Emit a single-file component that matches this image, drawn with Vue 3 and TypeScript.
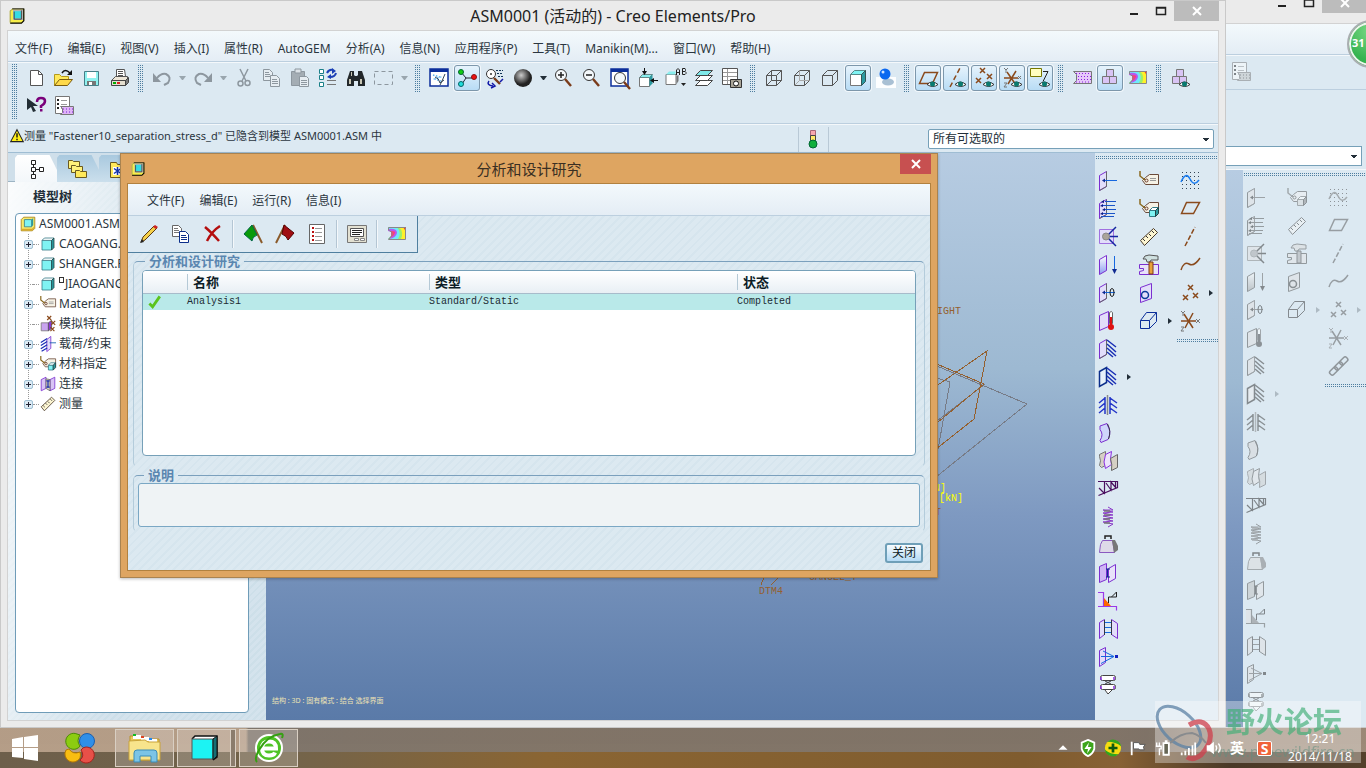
<script setup lang="ts">
import { ref } from 'vue'

interface Tool {
  id: string
  label: string
  pressed?: boolean
  arrow?: boolean
}

const P = '#7b2fd0'
const B = '#8a4a1c'
const plane = `<path d="M1.500 4.500l7-4v15l-7 4z" fill="#e2defa" stroke="${P}"/><path d="M8.500 .500v15l-7 4" fill="none" stroke="#666"/>`
const eye = '<path d="M9 16.500q5-5 11 0q-5 4-11 0z" fill="#fff" stroke="#333"/><circle cx="14.500" cy="16" r="2.500" fill="#0a7a70"/>'
const hatchR = '<path d="M9 1l9 7M9 5l9 8M9 9l9 8M9 13l6 5" stroke="#1a2fb5" stroke-width="1.500" fill="none"/>'
const glass = (x: number, y: number) => `<circle cx="${x}" cy="${y}" r="5.500" fill="#f4f8fb" stroke="#333"/><path d="M${x + 4} ${y + 4}l6 7" stroke="#7a3b1a" stroke-width="2.400"/>`
const cube = (x: number, y: number, s: number) => `<path d="M${x} ${y + 3}h${s}v${s}h-${s}z" fill="#7ff3f3" stroke="#357a86"/><path d="M${x} ${y + 3}l3-3h${s}l-3 3z" fill="#fff" stroke="#357a86"/><path d="M${x + s} ${y + 3}l3-3v${s}l-3 3z" fill="#2b9aa0" stroke="#244"/>`
const tag = '<path d="M6.500 6.500l4-3h9v10h-13l-3-4z" fill="#f6f2e6" stroke="#6a4a3a"/><circle cx="7.500" cy="9.500" r="1.500" fill="none" stroke="#6a3a2a"/><path d="M1 0v5l5 4" fill="none" stroke="#8a6a20" stroke-width="1.500"/>'
const cross = (x: number, y: number) => `<path d="M${x - 2} ${y - 2}l5 5M${x + 3} ${y - 2}l-5 5" stroke="${B}" stroke-width="1.500"/>`
const rainbow = '<path d="M1 3h18v12h-18l4-4v-3l-4-2z" fill="#ff3a2a"/><path d="M1 3h15q4 5 2 12h-17l4-4v-3l-4-2z" fill="#fff02a"/><path d="M1 3h11q5 5 2 12h-13l4-4v-3l-4-2z" fill="#9df06a"/><path d="M1 3h9q5 6 1 12h-10l4-4v-3l-4-2z" fill="#6fe8fa"/><path d="M1 5q9-1 9 4q-1 5-8 6l3-4v-3l-4-1z" fill="#b45af0"/><path d="M4 7q5 0 4 2q-1 3-4 4v-4z" fill="#ff3a7a"/><path d="M1.500 6v-2.500h17v12h-17l3.500-4v-3z" fill="none" stroke="#888"/>'
const mesh = '<path d="M1.500 3.500h18v12h-18l3-3v-6z" fill="#e6c8fa" stroke="#777"/><path d="M4 5.500h14M6 8.500h13M6 11.500h13M4 14h14" stroke="#8a1fe0" stroke-width="1.200" stroke-dasharray="1 2"/>'
const blocks = '<g fill="#d9c4f5" stroke="#777"><path d="M6.500 1.500h7v7h-7zM2.500 8.500h7v7h-7zM9.500 8.500h7v7h-7z"/></g>'
const box3 = (hidden: string) => `<g fill="none" stroke="#555"><path d="M2.500 7.500h10v10h-10zM2.500 7.500l5-5h10l-5 5M17.500 2.500v10l-5 5"/>${hidden}</g>`
const sheet = '<path d="M1.500 .500h14v17h-14z" fill="#fff" stroke="#777"/><path d="M3 4h2M3 8h2M3 12h2" stroke="#222" stroke-width="2"/><path d="M7 4.500h6M7 8.500h6M7 12.500h4" stroke="#999"/>'
const copy = (c: string) => `<path d="M1.500 1.500h6l3 3v8h-9z" fill="#fff" stroke="#666"/><path d="M3 4.500h4M3 6.500h5M3 8.500h5" stroke="#777"/><path d="M8.500 7.500h6l3 3v8h-9z" fill="#fff" stroke="${c}"/><path d="M10 11.500h5M10 13.500h6M10 15.500h6" stroke="${c}"/>`

const icons: Record<string, string> = {
  app: '<path d="M1 3l3-2h15v15l-3 3h-15z" fill="#f7ee4a"/><path d="M1.500 18v-14.500l3-2h13" fill="none" stroke="#8a8a55"/><path d="M5 2h13v13h-13z" fill="#b4b4b4"/><path d="M6 4h9v9h-9z" fill="#35dbe4"/><path d="M6.500 14v-9.500M15.500 3v11h-9" fill="none" stroke="#333"/><path d="M18.500 1v15l-3 3h-14" fill="none" stroke="#000" stroke-width="1.500"/><path d="M4 1h15" stroke="#000"/>',
  new: '<path d="M4.500 2.500h8l4 4v11h-12z" fill="#fff" stroke="#555"/><path d="M12.500 2.500v4h4" fill="none" stroke="#555"/>',
  open: '<path d="M.500 17.500v-11h5l2 2h7v3" fill="#ffe95a" stroke="#b59a1a"/><path d="M.500 17.500l5-6h13l-5 6z" fill="#ffd94a" stroke="#7a5c10"/><path d="M8 5q3-5 8 0" fill="none" stroke="#111" stroke-width="1.500"/><path d="M18 2v5h-5z" fill="#111"/>',
  save: '<path d="M2.500 3.500h14v14h-14z" fill="#8ff2f0" stroke="#477f88"/><path d="M5 4h9v6h-9z" fill="#fff"/><path d="M5 13h9v4h-9z" fill="#777"/><path d="M7 14h3v3h-3z" fill="#fff"/>',
  print: '<path d="M6.500 8.500v-7h8l1 7z" fill="#fff" stroke="#555"/><path d="M8 3.500h5M8 5.500h5M8 7.500h5" stroke="#555"/><path d="M1.500 12.500l4-4h12v4z" fill="#ece6d8" stroke="#555"/><path d="M1.500 12.500h14v5h-14z" fill="#e4decf" stroke="#444"/><path d="M15.500 12.500l3-3v5l-3 3z" fill="#777" stroke="#444"/><path d="M3 14h3v2h-3z" fill="#0a0"/><path d="M7 14h3v2h-3z" fill="#d22"/>',
  undo: '<path d="M1 5v9h8z" fill="#8d979f"/><path d="M5 10q4-5 9-4q6 3 2 9l-4 2" fill="none" stroke="#8d979f" stroke-width="2"/>',
  redo: '<path d="M19 5v9h-8z" fill="#8d979f"/><path d="M15 10q-4-5-9-4q-6 3-2 9l4 2" fill="none" stroke="#8d979f" stroke-width="2"/>',
  cut: '<g fill="none" stroke="#8d979f" stroke-width="1.500"><path d="M6 1l6 12M14 1l-6 12"/><circle cx="6.500" cy="15.500" r="2.500"/><circle cx="13.500" cy="15" r="2.500"/></g>',
  copyg: copy('#8d979f').replace(/#666|#777/g, '#8d979f').replace(/#fff/g, '#e6edf2'),
  paste: '<path d="M1.500 3.500h13v14h-13z" fill="#a4adb4" stroke="#8d979f"/><path d="M5 1h6v4h-6z" fill="#dde3e8" stroke="#8d979f"/><path d="M9.500 8.500h7l2 2v8h-9z" fill="#e6edf2" stroke="#8d979f"/><path d="M11 12.500h6M11 14.500h6M11 16.500h6" stroke="#8d979f"/>',
  regen: '<g fill="#fff" stroke="#1b8088"><path d="M1.500 1.500h4v4h-4zM1.500 7.500h4v4h-4zM1.500 14.500h4v4h-4z"/></g><path d="M9 5q2-4 6-3M18 5q-1 4-6 4" fill="none" stroke="#1a3fb5" stroke-width="2"/><path d="M14 0l4 3-4 3zM13 11l-4-2 4-3z" fill="#1a3fb5"/><path d="M9 12.500h9M9 16.500h9" stroke="#777"/>',
  find: '<path d="M4 3h4v4l1 1h2l1-1v-4h4l3 9v6h-7v-5h-4v5h-7v-6z" fill="#23282b"/><path d="M3 11h2v5h-2zM14 11h2v5h-2zM5 4h1v4h-1z" fill="#c9c6b4"/>',
  select: '<path d="M.500 3.500h18v13h-18z" fill="none" stroke="#8d979f" stroke-dasharray="4 3"/>',
  help: '<path d="M1 2v12l4-3 2 5 3-1-3-5h5z" fill="#222d35"/><path d="M11 6q0-4 4-4t4 3q0 3-4 5v2" fill="none" stroke="#7a007a" stroke-width="2.500"/><path d="M14 13h2.500v2.500h-2.500z" fill="#7a007a"/>',
  sheet: sheet + '<path d="M6.500 10.500h13v8h-13l2-2v-4z" fill="#dfb4f7" stroke="#777"/><path d="M9 13h10M9 16h10" stroke="#7a1fd0" stroke-dasharray="1 2"/>',
  repaint: '<path d="M1 1h18v17h-18z" fill="#fff" stroke="#0b2e9a" stroke-width="1.500"/><path d="M1 1h18v3h-18z" fill="#0b2e9a"/><path d="M4 7l7 2-5 2 6 2" stroke="#59b0ee" stroke-width="1.500" stroke-dasharray="1.500 1.500" fill="none"/><path d="M16 6l-3 7-2 4M6 9q4 1 5 6l4-3" fill="none" stroke="#345"/>',
  spin: '<path d="M4 4l5 6-4 6M9 10h8" fill="none" stroke="#223"/><circle cx="4" cy="4" r="2.500" fill="#1c1" stroke="#063"/><circle cx="4" cy="16" r="2.500" fill="#2dd" stroke="#066"/><circle cx="17" cy="9" r="2.500" fill="#e11" stroke="#811"/>',
  orient: '<circle cx="6" cy="6" r="4.500" fill="#fff" stroke="#333"/><circle cx="6" cy="6" r="1" fill="#333"/><path d="M9 10l6 6" stroke="#7a3b1a" stroke-width="2.400"/><path d="M11 2.500h7M12 5.500h6M13 8.500h5" stroke="#135" stroke-dasharray="2 1"/><path d="M4 13q-3 4 4 5M7 15l3 3-4 2M18 11l-3 3" fill="none" stroke="#1219a8" stroke-width="1.500"/>',
  sphere: '<defs><radialGradient id="sph" cx=".4" cy=".35"><stop offset="0" stop-color="#ccc"/><stop offset=".5" stop-color="#777"/><stop offset="1" stop-color="#222"/></radialGradient></defs><circle cx="10" cy="10" r="9" fill="url(#sph)"/>',
  zoomin: glass(7, 7) + '<path d="M4 7h6M7 4v6" stroke="#222" stroke-width="1.500"/>',
  zoomout: glass(7, 7) + '<path d="M4 7h6" stroke="#222" stroke-width="1.500"/>',
  refit: '<path d="M1 1h17v17h-17z" fill="#fff" stroke="#0b2e9a" stroke-width="1.500"/><path d="M1 1h17v3h-17z" fill="#0b2e9a"/>' + glass(10, 10),
  normal: '<path d="M1.500 9.500h10v9h-10z" fill="#fff" stroke="#777"/><path d="M1.500 9.500l3-3h10l-3 3z" fill="#8ee" stroke="#688"/><path d="M11.500 9.500l3-3v9l-3 3z" fill="#2b9aa0"/><path d="M6.500 0v5M13 12.500h7" stroke="#111"/><path d="M4 3h5l-2.500 4zM16 10v5l-4-2.500z" fill="#111"/>',
  saved: '<path d="M0 6.500h10v10h-10z" fill="#fff" stroke="#777"/><path d="M0 6.500l3-3h7l-1 3z" fill="#8ee"/><path d="M10.500 8l2-1v6l-2 3z" fill="#777"/><g fill="none" stroke="#222"><path d="M10.500 7v-5l1.500-1.500l1.500 1.500v5M10.500 4.500h3M16.500 .500v6h2.500l1-1v-1l-1-1h-2.500h2.500l.500-1v-1l-.500-1z"/></g><path d="M15 15h5l-2.500 3z" fill="#222"/>',
  layers: '<g fill="#fff" stroke="#444"><path d="M1.500 17.500l5-5h12l-5 5z"/><path d="M1.500 12.500l5-5h12l-5 5z"/><path d="M1.500 7.500l5-5h12l-5 5z" fill="#7feaea"/></g>',
  viewman: '<path d="M.500 .500h15v16h-15z" fill="#fff" stroke="#555"/><path d="M5.500 1v15M1 4.500h14M1 8.500h14M1 12.500h14" stroke="#999"/><path d="M8.500 11.500h11v8h-11z" fill="#aaa598" stroke="#333"/><circle cx="14" cy="15.500" r="2.500" fill="#fff" stroke="#111"/>',
  wire: box3('<path d="M7.500 2.500v10h10M7.500 12.500l-5 5"/>'),
  hidden: box3('<path d="M7.500 2.500v10h10M7.500 12.500l-5 5" stroke="#aaa"/>'),
  nohidden: box3(''),
  shaded: '<path d="M2.500 6.500h11v11h-11z" fill="#fff" stroke="#777"/><path d="M2.500 6.500l4-4h11l-4 4z" fill="#7ff3f3" stroke="#588"/><path d="M13.500 6.500l4-4v11l-4 4z" fill="#2b9aa0" stroke="#355"/>',
  ball: '<path d="M0 9h20v11h-20z" fill="#fdfeff"/><ellipse cx="12" cy="14" rx="6" ry="3.500" fill="#a9c0d4"/><circle cx="9" cy="6" r="5.500" fill="#0a68f0"/><circle cx="7" cy="4" r="1.500" fill="#cfe4ff"/>',
  dplane: `<path d="M1.500 15.500l5-11h13l-5 11z" fill="none" stroke="${B}" stroke-width="1.500"/>` + eye,
  daxis: `<path d="M4 19l10-19" stroke="${B}" stroke-width="1.500" stroke-dasharray="5 3"/>` + eye,
  dpoint: cross(8, 2) + cross(4, 12) + cross(15, 8) + eye,
  dcsys: `<path d="M2 10h14M5 4l9 13M14 3l-8 13" stroke="${B}" stroke-width="1.500"/><path d="M2 0l2 2 2-2M4 2v3M16 8l3 3M19 8l-3 3M2 15h3l-3 4h3" fill="none" stroke="#777"/>` + eye,
  danno: '<path d="M.500 .500h11v8h-11z" fill="#ffffc0" stroke="#777700"/><path d="M13 3.500h5l-5 10" fill="none" stroke="#222"/>' + eye,
  mesh, blocks, rainbow,
  blockseye: blocks + eye,
  tree: '<g fill="#fff" stroke="#222"><path d="M5.500 1.500h4v4h-4zM5.500 8.500h4v4h-4zM5.500 15.500h4v4h-4zM13.500 8.500h4v4h-4z"/><path d="M9.500 10.500h4M7.500 5.500v3M7.500 12.500v3"/></g>',
  folders: '<g stroke="#6a5a20"><path d="M.500 1.500h4l1 1h6v7h-11z" fill="#fff27a"/><path d="M3.500 6.500h4l1 1h6v6h-11z" fill="#fff27a"/><path d="M7.500 11.500h4l1 1h6v6h-11z" fill="#ffe95a"/></g>',
  fav: '<path d="M.500 3.500h6l1 2h12v13h-19z" fill="#ffe95a" stroke="#6a5a20"/><path d="M3 8h9v8h-9z" fill="#fff"/><path d="M7.500 8v8M4 9.500l7 5M11 9.500l-7 5" stroke="#13a" stroke-width="1.500"/>',
  part: cube(2.5, 2.5, 12),
  asm: '<path d="M1.500 4.500l3-3h14v14l-3 3h-14z" fill="#f7e96a" stroke="#a07a10"/><path d="M2 16h13l3-3v2l-3 3h-13z" fill="#d9a92a"/><path d="M5.500 4.500h9v9h-9z" fill="#7ff3f3" stroke="#357a86"/><path d="M14.500 4.500l2-2v9l-2 2z" fill="#2b9aa0"/>',
  tag: tag + '<path d="M11 7.500h6M11 9.500h6" stroke="#999"/>',
  tagcube: tag + cube(10.5, 8.5, 6),
  simfeat: '<path d="M1.500 8.500h9v10h-9z" fill="#c9a4f0" stroke="#777"/><path d="M10.500 8.500l4-3v10l-4 3z" fill="#8a3ad8" stroke="#555"/>' + cross(11, 2) + cross(16, 8) + cross(15, 16),
  loads: '<path d="M8.500 4.500l5-4v15l-5 4z" fill="#e2defa" stroke="#7b2fd0"/><path d="M1 8l8-5M1 12l8-5M1 16l8-5M2 19l7-4" stroke="#1a2fb5" stroke-width="1.500"/><path d="M12 8.500h8" stroke="#05a"/>',
  joints: '<path d="M1.500 4.500l6-3v14l-6 3zM12.500 4.500l6-3v14l-6 3z" fill="#d9c4f5" stroke="#7b2fd0"/><path d="M7.500 3.500l5 1v14l-5-3z" fill="#ddd8c8" stroke="#666"/><path d="M10 6v8M8 6h4M8 14h4" stroke="#12a" stroke-width="1.500"/>',
  ruler: '<path d="M1.500 13.500l13-12 4 4-13 13z" fill="#fdf6d2" stroke="#4a3a2a"/><path d="M4 12l2 2M7 9l2 2M10 7l2 2M13 4l2 2" stroke="#333"/>',
  force: plane + '<path d="M5 9.500h14" stroke="#1668e0"/><path d="M4 9.500l3-2v4z" fill="#112a90"/>',
  pressure: plane + '<path d="M7 2.500h11M4 6.500h13M7 10.500h11M4 14.500h13M3 17.500h13" stroke="#1b55c8"/><path d="M6 1v3l-3-1zM5 5v3l-3-1zM7 9v3l-3-1zM5 13v3l-3-1z" fill="#111a80"/>',
  bearing: '<path d="M1.500 2.500h14v14h-14z" fill="#e2defa" stroke="#a070e0"/><path d="M10 8l8-8M10 11l8 8M10 9.500h10" stroke="#1426a0" stroke-width="1.500"/><circle cx="8" cy="9.500" r="3.500" fill="#aaa49a" stroke="#888"/>',
  gravity: '<defs><linearGradient id="gp" x2="0" y2="1"><stop offset="0" stop-color="#fff"/><stop offset="1" stop-color="#8c9cf0"/></linearGradient></defs><path d="M1.500 4.500l7-4v15l-7 4z" fill="url(#gp)" stroke="#7b2fd0"/><path d="M16.500 1v14" stroke="#1668e0"/><path d="M14 14h5l-2.500 5z" fill="#112a90"/>',
  centrif: plane + '<path d="M5 9.500h12" stroke="#1668e0"/><path d="M4 9.500l3-2v4z" fill="#112a90"/><ellipse cx="14" cy="9.500" rx="2" ry="4" fill="none" stroke="#111"/>',
  temp: '<path d="M1.500 4.500l9-4v15l-9 4z" fill="#e2defa" stroke="#7b2fd0"/><path d="M11.500 1.500q2-2 3 0v11h-3z" fill="#fff" stroke="#666"/><path d="M12 6h2v8h-2z" fill="#d11"/><circle cx="13" cy="16" r="3" fill="#d11"/>',
  disp: plane + hatchR,
  dispb: '<path d="M1.500 4.500l7-4v15l-7 4z" fill="#e8f2fa" stroke="#0b2e8a" stroke-width="1.500"/>' + hatchR,
  symm: '<path d="M9.500 0v20" stroke="#888" stroke-width="1.500"/><path d="M7 2v17M12 2v17M7 3l-6 5M7 8l-6 5M7 13l-6 5M12 3l7 5M12 8l7 5M12 13l7 5" stroke="#2436c8" stroke-width="1.500"/>',
  shell: '<path d="M2 3l7-2.500l1 3q3 4 1 11l-1 2-7 3-1-2q4-6 0-11z" fill="#cfd6fb" stroke="#7b2fd0"/><path d="M9.500 1q4 7 1 15" fill="none" stroke="#334"/>',
  shells: '<path d="M1.500 3.500l6-3v14l-4 2-2-2q2-5 0-9z" fill="#d5d0c4" stroke="#777"/><path d="M7.500 3.500l6-3q-2 8 0 13l-6 4q-3-6 0-14z" fill="#ece4fb" stroke="#8a2fe0"/><path d="M12.500 7.500l7-4v13l-6 3q1-6-1-12z" fill="#d5d0c4" stroke="#666"/>',
  truss: '<path d="M0 2.500h19.500v6l-19 8M1 9l6 6M6.500 3v11M8 4l5 7v-8l5 6M17.500 3v5" fill="none" stroke="#4b1060" stroke-width="1.200"/>',
  spring: '<path d="M10 0l5 3h-10l10 2-10 1 10 2-10 1 10 2-10 1 10 2-10 1 10 2-5 3" fill="none" stroke="#8a3ac8"/><path d="M6 4h6M6 8h6M6 12h6M6 16h6" stroke="#777" stroke-width="1.500"/>',
  mass: '<path d="M7 4v-3h6v3" fill="none" stroke="#222" stroke-width="1.500"/><path d="M4.500 5.500h10l2 12h-15l1-8z" fill="#dedae8" stroke="#8a5ac0"/><path d="M14 5h3l3 6v4l-4 3z" fill="#777"/>',
  iface: '<path d="M1.500 3.500l7-3v16l-7 3z" fill="#cfb6f5" stroke="#7b2fd0"/><path d="M10.500 5.500l7-4v14l-7 4z" fill="#e8e2fa" stroke="#7b2fd0"/><path d="M9.500 6v8M8 6h4M8 14h4" stroke="#112a90"/>',
  weld: '<path d="M0 2h5v13h-5z" fill="#e2defa"/><path d="M0 1.500h5.500v14M0 15.500h18.500v4" fill="none" stroke="#9a3ae8" stroke-width="1.200"/><path d="M6 7l7 8h-7z" fill="#f60"/><path d="M10.500 12v-6h8v-5l-5 5" fill="none" stroke="#222"/>',
  links: '<path d="M1.500 3.500l5-3v15l-5 4zM19.500 4.500l-6-4v15l6 4z" fill="#e2defa" stroke="#7b2fd0"/><path d="M7 3.500h7M7 8.500h7M7 13.500h7" stroke="#1668e0"/><path d="M6.500 1v15M13.500 1v15" stroke="#334"/>',
  wlink: '<path d="M1.500 3.500l6-3v15l-6 4z" fill="#e2defa" stroke="#7b2fd0"/><path d="M5 4l11 5.500-13 7M3 9.500h13" fill="none" stroke="#1668e0"/><path d="M17 8h3v3h-3z" fill="#1020c0"/>',
  bolt: '<g fill="#fff" stroke="#444"><rect x="2.500" y=".500" width="15" height="5" rx="2"/><path d="M7 6l6 3M13 6l-6 3"/><rect x="2.500" y="9.500" width="15" height="5" rx="2"/><path d="M7 15l3 4 4-4"/></g><path d="M3 2v3M16 2v3M3 11v3M16 11v3" stroke="#8a2fe0" stroke-width="1.500"/>',
  hammer: '<path d="M.500 9.500h19v10h-19v-3l4-1v-2h-4z" fill="#e8e2fa" stroke="#7b2fd0"/><path d="M4 4q1-4 6-4l9 1v4h-7l-1 2h-3l-1-3z" fill="#cfe0e0" stroke="#555"/><path d="M10 7h4v12h-4z" fill="#e8a23a" stroke="#7a3b1a"/>',
  circle: '<path d="M1.500 4.500l11-4v15l-11 4z" fill="#e2defa" stroke="#7b2fd0"/><circle cx="6" cy="12" r="3.500" fill="none" stroke="#0b3a9a" stroke-width="1.500"/>',
  box: '<path d="M1.500 9.500h9v8h-9zM1.500 9.500l6-8h10l-7 8M10.500 17.500l7-7v-9" fill="none" stroke="#0b2e9a"/>',
  sketch: '<path d="M2 1.500h18M2 17.500h18M2 5.500h18M2 9.500h18M2 13.500h18" stroke="#345" stroke-dasharray="1 3"/><path d="M1 11q5-11 9-3t9 1" fill="none" stroke="#1a7cf0" stroke-width="1.500"/>',
  tplane: `<path d="M1.500 14.500l5-11h13l-6 11z" fill="none" stroke="${B}" stroke-width="1.500"/>`,
  taxis: `<path d="M5 19l10-19" stroke="${B}" stroke-width="1.500" stroke-dasharray="5 2"/>`,
  tcurve: `<path d="M1 15q3-9 8-6t11-6" fill="none" stroke="${B}" stroke-width="1.500"/>`,
  tpoint: cross(10, 4) + cross(5, 14) + cross(15, 12),
  tcsys: `<path d="M1 10h15M4 3l9 14M13 2l-8 15" stroke="${B}" stroke-width="1.500"/><path d="M1 0l2 2 2-2M3 2v3M16 8l4 4M20 8l-4 4M1 16h3l-3 4h3" fill="none" stroke="#777"/>`,
  chain: '<g fill="none" stroke="#444" stroke-width="1.500"><rect x="-4" y="-2" width="9" height="5" rx="2" transform="translate(5 15) rotate(-45)"/><rect x="-4" y="-2" width="9" height="5" rx="2" transform="translate(10 10) rotate(-45)"/><rect x="-4" y="-2" width="9" height="5" rx="2" transform="translate(15 5) rotate(-45)"/></g>',
  pencil: '<path d="M2 18l2-5 11-11 3 2-12 12z" fill="#f5d04a" stroke="#5a3a10"/><path d="M14 3l2-2 3 2-2 2z" fill="#c22"/><path d="M1 19l2-4 2 3z" fill="#222"/>',
  copy: copy('#0b2e8a'),
  del: '<path d="M2 3q6 5 14 14M17 2q-8 5-13 15" fill="none" stroke="#b40f0f" stroke-width="2.500"/>',
  gflag: '<path d="M10 1l9 18" stroke="#8a5a2a" stroke-width="2"/><path d="M9 1l-8 9 8 7q0-4 5-6z" fill="#0a9a0a" stroke="#064"/>',
  rflag: '<path d="M10 1l-9 18" stroke="#8a5a2a" stroke-width="2"/><path d="M9 1l10 8-6 7q-1-4-6-6z" fill="#a00d12" stroke="#500"/>',
  list: '<path d="M2.500 .500h15v19h-15z" fill="#fff" stroke="#666"/><path d="M5 4h2M5 8h2M5 12h2M5 16h2" stroke="#b11" stroke-width="2"/><path d="M8 4.500h7M8 8.500h7M8 12.500h7M8 16.500h7" stroke="#999"/>',
  form: '<path d="M.500 1.500h19v17h-19z" fill="#e3e1d2" stroke="#777"/><path d="M3.500 4.500h13v8h-13z" fill="#fff" stroke="#555"/><path d="M5 6.500h10M5 8.500h10M5 10.500h8" stroke="#222"/><path d="M7.500 14.500h4v2h-4zM13.500 14.500h4v2h-4z" fill="#fff" stroke="#888"/>',
  check: '<path d="M3 12l4 4 9-13" fill="none" stroke="#5bc41c" stroke-width="3.500"/>',
  warn: '<path d="M10 1l9 17h-18z" fill="#ffef1a" stroke="#222" stroke-width="1.500"/><path d="M9 6h2v6h-2zM9 14h2v2h-2z" fill="#111"/>',
  light: '<path d="M7.500 1.500h5v5h-5z" fill="#f7a8b0" stroke="#a67"/><path d="M7.500 6.500h5v5h-5z" fill="#ffe96a" stroke="#444"/><circle cx="10" cy="15" r="4" fill="#0fae3c" stroke="#063"/>',
}

const menus = ['文件(F)', '编辑(E)', '视图(V)', '插入(I)', '属性(R)', 'AutoGEM', '分析(A)', '信息(N)', '应用程序(P)', '工具(T)', 'Manikin(M)...', '窗口(W)', '帮助(H)']
const dialogMenus = ['文件(F)', '编辑(E)', '运行(R)', '信息(I)']

const t = (id: string, label: string, extra: Partial<Tool> = {}): Tool => ({ id, label, ...extra })

const toolGroups: Tool[][] = [
  [t('new', '新建'), t('open', '打开'), t('save', '保存'), t('print', '打印')],
  [t('undo', '撤消', { arrow: true }), t('redo', '重做', { arrow: true }), t('cut', '剪切'), t('copyg', '复制'), t('paste', '粘贴'), t('regen', '再生'), t('find', '查找'), t('select', '选取', { arrow: true })],
  [t('repaint', '重画'), t('spin', '旋转中心', { pressed: true }), t('orient', '定向模式'), t('sphere', '外观', { arrow: true }), t('zoomin', '放大'), t('zoomout', '缩小'), t('refit', '重新调整'), t('normal', '重定向'), t('saved', '已命名视图'), t('layers', '层'), t('viewman', '视图管理器')],
  [t('wire', '线框'), t('hidden', '隐藏线'), t('nohidden', '消隐'), t('shaded', '着色', { pressed: true }), t('ball', '增强的真实感')],
  [t('dplane', '平面显示', { pressed: true }), t('daxis', '轴显示', { pressed: true }), t('dpoint', '点显示', { pressed: true }), t('dcsys', '坐标系显示', { pressed: true }), t('danno', '注释显示', { pressed: true })],
  [t('mesh', '网格'), t('blocks', '分析', { pressed: true }), t('rainbow', '结果')],
  [t('blockseye', '模拟显示')],
]
const secondRow: Tool[] = [t('help', '上下文帮助'), t('sheet', '模型设置')]

const colA: Tool[] = [t('force', '力'), t('pressure', '压力'), t('bearing', '承载'), t('gravity', '重力'), t('centrif', '离心'), t('temp', '温度'), t('disp', '位移'), t('dispb', '约束', { arrow: true }), t('symm', '对称'), t('shell', '壳'), t('shells', '壳对'), t('truss', '梁'), t('spring', '弹簧'), t('mass', '质量'), t('iface', '界面'), t('weld', '焊缝'), t('links', '刚性连接'), t('wlink', '加权连接'), t('bolt', '紧固件')]
const colC: Tool[] = [t('sketch', '草绘'), t('tplane', '平面'), t('taxis', '轴'), t('tcurve', '曲线'), t('tpoint', '点', { arrow: true }), t('tcsys', '坐标系')]
const tail: Tool[] = [t('ruler', '测量'), t('hammer', '网格控制'), t('circle', '曲面区域'), t('box', '体积块', { arrow: true })]
const frontPalette: Tool[][] = [colA, [t('tag', '材料'), t('tagcube', '材料分配'), ...tail], colC]
const backPalette: Tool[][] = [colA, [t('tagcube', '材料分配'), ...tail], [...colC, t('chain', '链')]]

const tree = [
  { icon: 'part', text: 'CAOGANG.PRT', open: true },
  { icon: 'part', text: 'SHANGER.PRT', open: true },
  { icon: 'part', text: 'JIAOGANG.PRT', open: false, mark: true },
  { icon: 'tag', text: 'Materials', open: true },
  { icon: 'simfeat', text: '模拟特征', open: false },
  { icon: 'loads', text: '载荷/约束', open: true },
  { icon: 'tagcube', text: '材料指定', open: true },
  { icon: 'joints', text: '连接', open: true },
  { icon: 'ruler', text: '测量', open: true },
]

const dialogTools: Tool[][] = [
  [t('pencil', '编辑'), t('copy', '复制'), t('del', '删除')],
  [t('gflag', '开始'), t('rflag', '停止'), t('list', '设置')],
  [t('form', '摘要')],
  [t('rainbow', '结果')],
]
const studies = [{ name: 'Analysis1', type: 'Standard/Static', state: 'Completed' }]
const filter = ref('所有可选取的')
const note = ref('')
</script>

<template>
  <main class="desktop">
    <section class="win back">
      <header class="titlebar">
        <span></span><span></span>
        <div class="caption">
          <button class="cap" aria-label="最小化"><svg class="g" viewBox="0 0 12 12"><path d="M2 9h8" stroke="#222" stroke-width="2" /></svg></button>
          <button class="cap" aria-label="最大化"><svg class="g" viewBox="0 0 12 12"><path d="M1.500 2.500h9v7h-9zM1 3h10" fill="none" stroke="#222" stroke-width="1.500" /></svg></button>
          <button class="cap close" aria-label="关闭"><svg class="g" viewBox="0 0 12 12"><path d="M2 2l8 8M10 2l-8 8" stroke="#fff" stroke-width="2" /></svg></button>
        </div>
      </header>
      <div class="client">
        <div class="menubar"></div>
        <div class="backtools"><button class="tool" aria-label="模型设置"><svg class="ic" viewBox="0 0 20 20" v-html="icons.sheet"></svg></button></div>
        <div class="backmsg"><select class="combo" aria-label="选取过滤器"><option></option></select></div>
        <div class="backbody">
          <div class="view"></div>
          <div class="palette">
            <div v-for="(col, c) in backPalette" :key="c" class="pcol">
              <div v-for="p in col" :key="p.id" class="pitem">
                <button class="tool" :aria-label="p.label"><svg class="ic" viewBox="0 0 20 20" v-html="icons[p.id]"></svg></button>
                <i v-if="p.arrow" class="right"></i>
              </div>
              <i v-if="c === 2" class="dots"></i>
            </div>
          </div>
        </div>
      </div>
    </section>

    <section class="win front">
      <header class="titlebar">
        <svg class="ic appic" viewBox="0 0 20 20" v-html="icons.app"></svg>
        <h1>ASM0001 (活动的) - Creo Elements/Pro</h1>
        <div class="caption">
          <button class="cap" aria-label="最小化"><svg class="g" viewBox="0 0 12 12"><path d="M2 9h8" stroke="#222" stroke-width="2" /></svg></button>
          <button class="cap" aria-label="最大化"><svg class="g" viewBox="0 0 12 12"><path d="M1.500 2.500h9v7h-9zM1 3h10" fill="none" stroke="#222" stroke-width="1.500" /></svg></button>
          <button class="cap close" aria-label="关闭"><svg class="g" viewBox="0 0 12 12"><path d="M2 2l8 8M10 2l-8 8" stroke="#fff" stroke-width="2" /></svg></button>
        </div>
      </header>
      <div class="client">
        <nav class="menubar"><button v-for="m in menus" :key="m" class="menu">{{ m }}</button></nav>
        <div class="toolbar">
          <i class="grip tall"></i>
          <div class="rows">
            <div class="row">
              <template v-for="(g, gi) in toolGroups" :key="gi">
                <i v-if="gi > 0" class="grip"></i>
                <template v-for="b in g" :key="b.id">
                  <button class="tool" :class="{ pressed: b.pressed }" :aria-label="b.label"><svg class="ic" viewBox="0 0 20 20" v-html="icons[b.id]"></svg></button>
                  <i v-if="b.arrow" class="down" :class="{ dark: b.id === 'sphere' }"></i>
                </template>
              </template>
            </div>
            <div class="row">
              <button v-for="b in secondRow" :key="b.id" class="tool" :aria-label="b.label"><svg class="ic" viewBox="0 0 20 20" v-html="icons[b.id]"></svg></button>
            </div>
          </div>
        </div>
        <div class="message">
          <p><svg class="warn" viewBox="0 0 20 20" v-html="icons.warn"></svg>测量 "Fastener10_separation_stress_d" 已隐含到模型 ASM0001.ASM 中</p>
          <span class="status"><svg class="ic" viewBox="0 0 20 20" v-html="icons.light"></svg></span>
          <select v-model="filter" class="combo" aria-label="选取过滤器"><option>所有可选取的</option></select>
        </div>
        <div class="body">
          <aside class="nav">
            <div class="tabs">
              <button class="tab on" aria-label="模型树"><svg class="ic" viewBox="0 0 20 20" v-html="icons.tree"></svg></button>
              <button class="tab" aria-label="文件夹浏览器"><svg class="ic" viewBox="0 0 20 20" v-html="icons.folders"></svg></button>
              <button class="tab" aria-label="收藏夹"><svg class="ic" viewBox="0 0 20 20" v-html="icons.fav"></svg></button>
            </div>
            <h2>模型树</h2>
            <div class="tree">
              <div class="root"><svg class="ti" viewBox="0 0 20 20" v-html="icons.asm"></svg>ASM0001.ASM</div>
              <ul>
                <li v-for="n in tree" :key="n.text">
                  <button v-if="n.open" class="exp" aria-label="展开"></button><i v-else class="noexp"></i>
                  <i class="stem"></i>
                  <svg class="ti" viewBox="0 0 20 20" v-html="icons[n.icon]"></svg>
                  <i v-if="n.mark" class="mark"></i><span>{{ n.text }}</span>
                </li>
              </ul>
            </div>
          </aside>
          <div class="view">
            <svg class="scene" width="100%" height="100%">
              <path d="M640 200L761 251L660 332M640 216L684 229L671 302M671 268l48-37" fill="none" stroke="#777b86" />
              <path d="M640 254L721 198L708 266L660 304M640 198L718 231L660 279M495 432l6-16M505 432l14-14" fill="none" stroke="#94602f" />
              <g class="lbl">
                <text x="665" y="161" fill="#94602f">RIGHT</text>
                <text x="669" y="362" fill="#94602f">T</text>
                <text x="493" y="441" fill="#94602f">DTM4</text>
                <text x="543" y="427" fill="#94602f">CANCEL_T</text>
                <text x="662" y="338" fill="#ff0">[N]</text>
                <text x="673" y="348" fill="#ff0">[kN]</text>
              </g>
            </svg>
            <p class="modeline">结构 : 3D : 固有模式 : 结合 选择界面</p>
          </div>
          <div class="palette">
            <div v-for="(col, c) in frontPalette" :key="c" class="pcol">
              <div v-for="p in col" :key="p.id" class="pitem">
                <button class="tool" :aria-label="p.label"><svg class="ic" viewBox="0 0 20 20" v-html="icons[p.id]"></svg></button>
                <i v-if="p.arrow" class="right"></i>
              </div>
              <i v-if="c === 2" class="dots"></i>
            </div>
          </div>
        </div>
      </div>
    </section>

    <section class="dialog" role="dialog" aria-labelledby="dlg-title">
      <header class="dtitle">
        <svg class="ic" viewBox="0 0 20 20" v-html="icons.app"></svg>
        <h2 id="dlg-title">分析和设计研究</h2>
        <button class="dclose" aria-label="关闭"><svg class="g" viewBox="0 0 12 12"><path d="M2 2l8 8M10 2l-8 8" stroke="#fff" stroke-width="2" /></svg></button>
      </header>
      <div class="dclient">
        <nav class="menubar"><button v-for="m in dialogMenus" :key="m" class="menu">{{ m }}</button></nav>
        <div class="dtools">
          <template v-for="(g, gi) in dialogTools" :key="gi">
            <i v-if="gi > 0" class="sep"></i>
            <button v-for="b in g" :key="b.id" class="dtool" :aria-label="b.label"><svg class="ic" viewBox="0 0 20 20" v-html="icons[b.id]"></svg></button>
          </template>
        </div>
        <fieldset class="studies">
          <legend>分析和设计研究</legend>
          <div class="list">
            <table>
              <thead><tr><th class="c0"></th><th class="c1">名称</th><th class="c2">类型</th><th>状态</th></tr></thead>
              <tbody>
                <tr v-for="s in studies" :key="s.name">
                  <td><svg class="chk" viewBox="0 0 20 20" v-html="icons.check"></svg></td>
                  <td>{{ s.name }}</td><td>{{ s.type }}</td><td>{{ s.state }}</td>
                </tr>
              </tbody>
            </table>
          </div>
        </fieldset>
        <fieldset class="desc">
          <legend>说明</legend>
          <textarea v-model="note" aria-label="说明" readonly></textarea>
        </fieldset>
        <div class="foot"><button class="ok">关闭</button></div>
      </div>
    </section>

    <div class="bubble">31</div>

    <footer class="taskbar">
      <button class="start" aria-label="开始"><svg width="28" height="26" viewBox="0 0 28 26"><path d="M1 4l11-2v10h-11zM13 2l14-2v12h-14zM1 13h11v10l-11-1zM13 13h14v13l-14-2z" fill="#fff" /></svg></button>
      <button class="start" aria-label="启动器"><svg width="32" height="32" viewBox="0 0 32 32"><circle cx="23" cy="9" r="7.500" fill="#2f8fe8" stroke="#1a5fb0" /><path d="M13 2a8 8 0 1 0 -1 15q3-1 4-3q-4-5 0-11z" fill="#8ccc10" stroke="#4c8a05" /><path d="M2 18a8 8 0 1 0 14 8q1-3 0-6q-7 3-11-3z" fill="#f9bd12" stroke="#b57a05" /><path d="M22 15a8 8 0 1 1-6 13q5-4 1-10q2-3 5-3z" fill="#e85048" stroke="#a8221c" /></svg></button>
      <button class="task" aria-label="文件资源管理器">
        <svg width="34" height="30" viewBox="0 0 34 30"><path d="M2 3h10l2 3h17v21h-29z" fill="#e9c95a" stroke="#b8932c" /><path d="M5 2h8v4h-8zM13 4h8v4h-8zM21 6h8v4h-8z" fill="#fff" /><path d="M5 1h3v2h-3z" fill="#1b2" /><path d="M13 3h3v2h-3z" fill="#d42" /><path d="M21 5h3v2h-3z" fill="#28e" /><path d="M1 8l16-1 3 2h12v18h-31z" fill="#f8e48c" stroke="#c9a33a" /><path d="M6 29v-9q0-3 3-3h17q3 0 3 3v9h-6v-6h-11v6z" fill="#7cc4e6" stroke="#3b8cb8" /></svg>
      </button>
      <button class="task stack" aria-label="Creo"><svg width="28" height="26" viewBox="0 0 28 26"><path d="M1 4l3-3h22v21l-4 3" fill="#fff" stroke="#111" stroke-width="1.500" /><path d="M1 4h21v20h-21z" fill="#1cf3f3" stroke="#555" /><path d="M22 4l4-3v20l-4 4z" fill="#176f74" stroke="#111" /></svg></button>
      <button class="task" aria-label="浏览器"><svg width="30" height="32" viewBox="0 0 30 32"><circle cx="15" cy="16" r="13" fill="#4fc325" stroke="#fff" stroke-width="2" /><path d="M9 16.500h13q0-7-7-7t-7 7q0 7 7 7q5 0 6-3" fill="none" stroke="#fff" stroke-width="4" /><path d="M3 30q-3-3 2-12q8-14 21-16q4-1 2 4" fill="none" stroke="#35a012" stroke-width="2" /></svg></button>
      <div class="tray">
        <svg class="t" viewBox="0 0 20 20"><path d="M5 12h10l-5-5z" fill="#fff" /></svg>
        <svg class="t" viewBox="0 0 20 20"><path d="M10 1l7 3v7q-2 6-7 8q-5-2-7-8v-7z" fill="#3ea51c" stroke="#fff" stroke-width="2" /><path d="M11 4l-5 7h4l-1 5 5-7h-4z" fill="#fff" /></svg>
        <svg class="t" viewBox="0 0 20 20"><circle cx="10" cy="10" r="9" fill="#f5dc10" /><path d="M4 3a9 9 0 0 1 15 5q-6-5-15-5zM16 17a9 9 0 0 1-15-5q6 5 15 5z" fill="#2fa51e" /><path d="M10 5v10M5 10h10" stroke="#0d5a10" stroke-width="3" /></svg>
        <svg class="t" viewBox="0 0 20 20"><path d="M3 3v15" stroke="#fff" stroke-width="2" /><path d="M5 4h6l1 2h6l-2 3 1 3h-5l-1-1h-6z" fill="#fff" stroke="#555" /></svg>
        <svg class="t" viewBox="0 0 20 20"><path d="M10.500 4.500h6v13h-6zM12 2.500h3" fill="#665" stroke="#fff" stroke-width="2" /><path d="M3 4v4M6 4v4M2 8h6v3h-2v7" fill="none" stroke="#fff" stroke-width="1.500" /></svg>
        <svg class="t" viewBox="0 0 20 20"><path d="M3 18v-3M7 18v-5M11 18v-8M15 18v-11M18 18v-14" stroke="#fff" stroke-width="2" /></svg>
        <svg class="t" viewBox="0 0 20 20"><path d="M3 7h3l5-4v14l-5-4h-3z" fill="#fff" /><path d="M13 7q2 3 0 6M16 5q4 5 0 10" fill="none" stroke="#fff" stroke-width="1.500" /></svg>
        <span class="ime">英</span>
        <span class="sogou">S</span>
        <time class="clock"><span>12:21</span><span>2014/11/18</span></time>
      </div>
    </footer>

    <div class="mark-forum">
      <svg width="60" height="62" viewBox="0 0 60 62"><g fill="none"><ellipse cx="24" cy="26" rx="15" ry="26" transform="rotate(-48 24 26)" stroke="#5c82a5" stroke-width="3" /><path d="M34 24q14-8 20 4q5 12-8 26q-8 6-14 2" stroke="#cf3f4c" stroke-width="5" /><path d="M15 42q10-10 22-10q8 2 14 10" stroke="#7a8188" stroke-width="2" /></g></svg>
      <div><strong>野火论坛</strong><span>www.proewildfire.cn</span></div>
    </div>
  </main>
</template>

<style>
html, body { margin: 0; height: 100%; overflow: hidden; }
</style>

<style scoped>
* { box-sizing: border-box; }
.desktop { position: relative; height: 100vh; min-height: 600px; overflow: hidden; background: #7d6b52; font: 12px/16px "Noto Sans", "Noto Sans CJK SC", sans-serif; color: #2b3640; }
button { font: inherit; color: inherit; border: 0; padding: 0; background: none; }
h1, h2, p, ul { margin: 0; padding: 0; font-weight: 400; }
i { display: block; flex: none; }
svg { display: block; flex: none; }
.ic { width: 20px; height: 20px; overflow: visible; }
.g { width: 12px; height: 12px; }

.win { position: absolute; background: #ebebeb; display: flex; flex-direction: column; border: 1px solid #c9c9c9; }
.front { left: 0; top: 0; right: 140px; bottom: 40px; padding: 0 6px 6px; }
.back { left: calc(100% - 141px); top: -9px; right: -8px; bottom: 40px; padding: 0; }
.titlebar { display: grid; grid-template-columns: 1fr auto 1fr; height: 29px; flex: none; align-items: center; }
.titlebar h1 { font-size: 16px; line-height: 20px; color: #222; }
.appic { width: 16px; height: 16px; margin-left: 2px; }
.caption { display: flex; justify-content: flex-end; align-self: start; height: 20px; }
.cap { width: 27px; display: flex; align-items: center; justify-content: center; }
.cap.close { width: 45px; background: #bcbcbc; }
.client { flex: 1; min-height: 0; display: flex; flex-direction: column; border: 1px solid #d2d2d2; background: #dce9f2; }
.back .titlebar { height: 31px; }
.back .caption { height: 21px; padding-right: 6px; }
.back .client { border-width: 1px 0 0; }

.menubar { display: flex; align-items: center; gap: 15px; height: 31px; padding: 5px 7px 0; flex: none; background: linear-gradient(#f3f9fc, #e4edf5); border-bottom: 1px solid #bccfdf; }
.menu { line-height: 20px; white-space: nowrap; }
.toolbar { display: flex; height: 62px; padding: 1px 0 4px; flex: none; border-top: 1px solid #f4f8fb; border-bottom: 1px solid #bccfdf; }
.rows { flex: 1; }
.row { display: flex; height: 28px; align-items: center; }
.grip { width: 14px; height: 27px; position: relative; padding: 0 4px; }
.grip::before { content: ""; display: block; height: 100%; width: 5px; background: conic-gradient(from 270deg at 1px 1px, #4d7d9f 90deg, transparent 0) 0 0 / 2px 2px; }
.grip.tall { height: 55px; padding: 0 4px; }
.tool { width: 28px; height: 28px; flex: none; display: flex; align-items: center; justify-content: center; }
.pressed { width: 26px; height: 26px; margin: 0 1px; border: 1px solid #7d97ab; border-radius: 3px; background: linear-gradient(#e6f3fc, #b8dcf5); box-shadow: 0 0 0 1px #f2f8fc; }
.down { width: 13px; height: 4px; padding: 0 3px; }
.down::before { content: ""; display: block; border: 3px solid transparent; border-top: 4px solid #9aa6ae; border-bottom: 0; }
.down.dark::before { border-top-color: #222e38; }
.message { display: flex; align-items: center; height: 29px; padding: 1px 4px 0 2px; flex: none; border-top: 1px solid #f4f8fb; border-bottom: 1px solid #9fbdd3; font-size: 11px; }
.warn { width: 14px; height: 14px; overflow: visible; }
.message p { flex: 1; display: flex; align-items: center; white-space: nowrap; padding-bottom: 6px; }
.status { width: 31px; height: 25px; margin-right: 99px; padding-right: 2px; display: flex; align-items: center; justify-content: center; border: solid #b9c9d6; border-width: 0 1px; }
.combo { appearance: none; width: 286px; height: 20px; padding: 0 4px; border: 1px solid #76a0b8; border-radius: 2px; font: 12px/18px "Noto Sans", "Noto Sans CJK SC", sans-serif; color: #222e38; background: linear-gradient(to bottom right, #222e38 50%, transparent 51%) right 4px top 8px / 3px 4px no-repeat, linear-gradient(to bottom left, #222e38 50%, transparent 51%) right 7px top 8px / 3px 4px no-repeat, #fff; }
.body { flex: 1; min-height: 0; display: grid; grid-template-columns: 258px 1fr 123px; }
.nav { display: flex; flex-direction: column; min-height: 0; padding-bottom: 7px; background: linear-gradient(100deg, #ffffffee 0, #ffffff00 55%), repeating-linear-gradient(135deg, #d4e3ed 0 3px, #cddfe9 3px 5px); }
.tabs { display: flex; height: 29px; padding: 2px 0 0 7px; background: #cfdfea; border-bottom: 1px solid #9db4c4; }
.tab { width: 48px; height: 27px; margin-right: -6px; padding-left: 11px; clip-path: polygon(0 10%, 5% 0, 72% 0, 100% 100%, 0 100%); background: linear-gradient(#a9c9df, #cbdfec); display: flex; align-items: center; }
.tab.on { background: linear-gradient(#fff, #f3f7fa); }
.nav h2 { font-size: 13px; line-height: 28px; padding-left: 25px; font-weight: 700; color: #222e38; }
.tree { flex: 1; min-height: 0; margin: 3px 17px 0 7px; border: 1px solid #6f9cb8; border-radius: 4px; background: #fff; overflow: hidden; }
.root, .tree li { display: flex; align-items: center; height: 20px; white-space: nowrap; }
.root { padding-left: 4px; }
.root .ti { margin-right: 3px; }
.ti { width: 16px; height: 16px; overflow: visible; }
.tree ul { list-style: none; margin-left: 12px; background: repeating-linear-gradient(#999 0 1px, transparent 1px 2px) 0 0 / 1px calc(100% - 10px) no-repeat; }
.tree li .ti { margin-right: 3px; }
.exp { width: 9px; height: 9px; margin-left: -4px; border: 1px solid #9fc0d4; border-radius: 2px; background: linear-gradient(#223, #223) center / 5px 1px no-repeat, linear-gradient(#223, #223) center / 1px 5px no-repeat, #dcebf5; }
.noexp { width: 5px; height: 1px; border-top: 1px dotted #999; }
.stem { width: 6px; height: 1px; margin-right: 1px; border-top: 1px dotted #999; }
.mark { width: 5px; height: 6px; border: 1px solid #333; margin: -8px 1px 0 0; }
.view { position: relative; background: linear-gradient(#b7cce2, #9db9d2 38%, #7e99c1 64%, #5a7aa8); overflow: hidden; }
.scene { position: absolute; inset: 0; shape-rendering: crispEdges; }
.lbl { font: 10px "Liberation Mono", monospace; }
.modeline { position: absolute; left: 6px; bottom: 12px; font: 7px/14px "Noto Sans", "Noto Sans CJK SC", sans-serif; word-spacing: normal; color: #ece2b4; white-space: nowrap; }
.palette { display: grid; grid-template-columns: repeat(3, 41px); align-content: start; padding-top: 14px; background: #dce9f2; position: relative; }
.palette::before { content: ""; position: absolute; left: 1px; right: 0; top: 3px; height: 4px; background: conic-gradient(from 270deg at 1px 1px, #4d7d9f 90deg, transparent 0) 0 0 / 2px 2px; }
.pitem { display: flex; align-items: center; height: 28px; }
.pitem .tool { width: 26px; }
.right { border: 3px solid transparent; border-left: 4px solid #222e38; border-right: 0; margin-left: 6px; }
.dots { height: 4px; margin-top: 4px; background: conic-gradient(from 270deg at 1px 1px, #4d7d9f 90deg, transparent 0) 0 0 / 2px 2px; }

.backtools { height: 35px; padding: 2px 0 0 1px; border-top: 1px solid #f4f8fb; border-bottom: 1px solid #bccfdf; flex: none; }
.backtools .ic, .back .palette .ic { filter: grayscale(1); opacity: .5; }
.back .right { opacity: .25; }
.backmsg { height: 80px; flex: none; padding: 56px 11px 0 0; border-bottom: 1px solid #f4f8fb; }
.backmsg .combo { display: block; width: 100%; border-left: 0; border-radius: 0; }
.backbody { flex: 1; min-height: 0; display: grid; grid-template-columns: 17px 1fr; }
.back .palette { overflow: hidden; }

.dialog { position: absolute; left: 120px; top: 153px; right: 428px; border: 1px solid #a98350; background: #dea561; padding: 0 6px 6px; box-shadow: 0 1px 3px #0004; }
.dtitle { display: grid; grid-template-columns: 1fr auto 1fr; align-items: center; height: 29px; }
.dtitle .ic { width: 14px; height: 14px; margin-left: 4px; }
.dtitle h2 { font-size: 15px; line-height: 20px; color: #3a2f22; }
.dclose { justify-self: end; align-self: start; width: 31px; height: 20px; background: #c75050; display: flex; align-items: center; justify-content: center; }
.dclient { border: 1px solid #b1813f; background: repeating-linear-gradient(135deg, #dce9f1 0 4px, #d6e5ee 4px 6px); }
.dclient .menubar { padding: 2px 19px 0; height: 32px; }
.dtools { display: flex; align-items: center; width: max-content; height: 37px; padding: 0 4px 0 5px; background: #dce9f2; border: solid #4f7f9f; border-width: 0 1px 1px 0; }
.dtool { width: 32px; height: 32px; display: flex; align-items: center; justify-content: center; }
.sep { width: 2px; height: 28px; margin: 0 3px; border-left: 1px solid #b4c6d4; border-right: 1px solid #f4f8fb; }
fieldset { min-width: 0; margin: 0 5px; border: 1px solid #b4ccdb; border-top-color: #7ba0bd; border-bottom-color: transparent; border-radius: 5px; }
legend { margin-left: 3px; font-size: 13px; line-height: 16px; font-weight: 700; color: #5a86b0; padding: 0 4px; }
.studies { padding: 1px 8px 10px 8px; }
.list { height: 186px; border: 1px solid #76a0b8; border-radius: 4px; background: #fff; overflow: hidden; }
table { width: 100%; border-collapse: collapse; table-layout: fixed; }
.c0 { width: 44px; }
.c1 { width: 242px; }
.c2 { width: 308px; }
th { height: 22px; padding: 0 6px; text-align: left; font-size: 13px; line-height: 20px; color: #0c1c26; background: linear-gradient(90deg, #b5c9d6, #b5c9d6) left center / 1px 16px no-repeat, linear-gradient(#fff, #e8eff4); border-bottom: 1px solid #a7bccb; }
.c0 { background: linear-gradient(#fff, #e8eff4); }
td { height: 17px; padding: 0; font: 10px/16px "Liberation Mono", monospace; color: #1c2b33; background: #b9e9e9; }
.chk { width: 16px; height: 16px; margin-left: 4px; }
.desc { padding: 0 4px 4px; }
.desc legend { margin-left: 6px; }
textarea { display: block; width: 100%; height: 44px; resize: none; border: 1px solid #7aa7c4; border-radius: 3px; background: #eff3f5; }
.foot { display: flex; justify-content: flex-end; padding: 11px 7px 7px; }
.ok { width: 38px; height: 20px; border: 2px solid #6f9fb8; border-radius: 3px; background: linear-gradient(#f7fbfe, #b4daf5); line-height: 14px; color: #0c1c26; }

.bubble { position: absolute; right: -29px; top: 20px; width: 48px; height: 48px; padding-left: 3px; border: 2px solid #a9aeb0; border-radius: 50%; background: radial-gradient(circle at 50% 20%, #7bd987, #35b34f 70%); box-shadow: inset 0 0 0 2px #eef6ee; color: #fff; font-size: 11px; line-height: 42px; font-weight: 700; }

.taskbar { position: absolute; left: 0; right: 0; bottom: 0; height: 40px; display: flex; align-items: center; background: linear-gradient(#c0a48e55 0 16px, #d9bda055 16px 24px, transparent 24px), linear-gradient(90deg, #6d5f4b 0, #74644a 22%, #8a6533 40%, #7f5c2f 75%, #876135 82%, #4a3928 90%, #54402a); }
.taskbar::before { content: ""; position: absolute; inset: 0 0 16px; background: linear-gradient(90deg, #bba38d 0 18%, #7c736b 18.200% 84%, #a28f7e 90%); opacity: .85; z-index: 0; }
.taskbar > * { position: relative; }
.start { width: 50px; height: 40px; display: flex; align-items: center; justify-content: center; }
.start + .start { width: 60px; margin-right: 5px; }
.task { width: 59px; height: 38px; margin-right: 3px; border: 1px solid #d9cfc3; background: #fff3; display: flex; align-items: center; justify-content: center; }
.stack { padding-right: 4px; box-shadow: inset -4px 0 0 #8a7c6c, inset -5px 0 0 #d9cfc3; }
.tray { margin-left: auto; margin-right: 11px; display: flex; align-items: center; gap: 7px; color: #fff; z-index: 2; }
.t { width: 18px; height: 18px; }
.ime { font-size: 14px; font-weight: 700; margin: 0 6px 0 1px; }
.sogou { width: 15px; height: 15px; background: #f0633a; border: 1px solid #fff; border-radius: 2px; font-size: 14px; line-height: 13px; font-weight: 700; text-align: center; }
.clock { display: flex; flex-direction: column; align-items: center; line-height: 18px; width: 70px; margin-left: 6px; }

.mark-forum { position: absolute; right: 5px; bottom: 5px; width: 206px; height: 62px; background: #ffffff59; display: flex; pointer-events: none; }
.mark-forum svg { opacity: .75; }
.mark-forum div { position: relative; margin-left: -4px; display: flex; flex-direction: column; white-space: nowrap; color: #3fae75; opacity: .65; }
.mark-forum strong { font-size: 29px; line-height: 42px; padding-left: 15px; }
.mark-forum span { font-size: 15px; line-height: 16px; color: #5f8f80; opacity: .8; }
</style>
